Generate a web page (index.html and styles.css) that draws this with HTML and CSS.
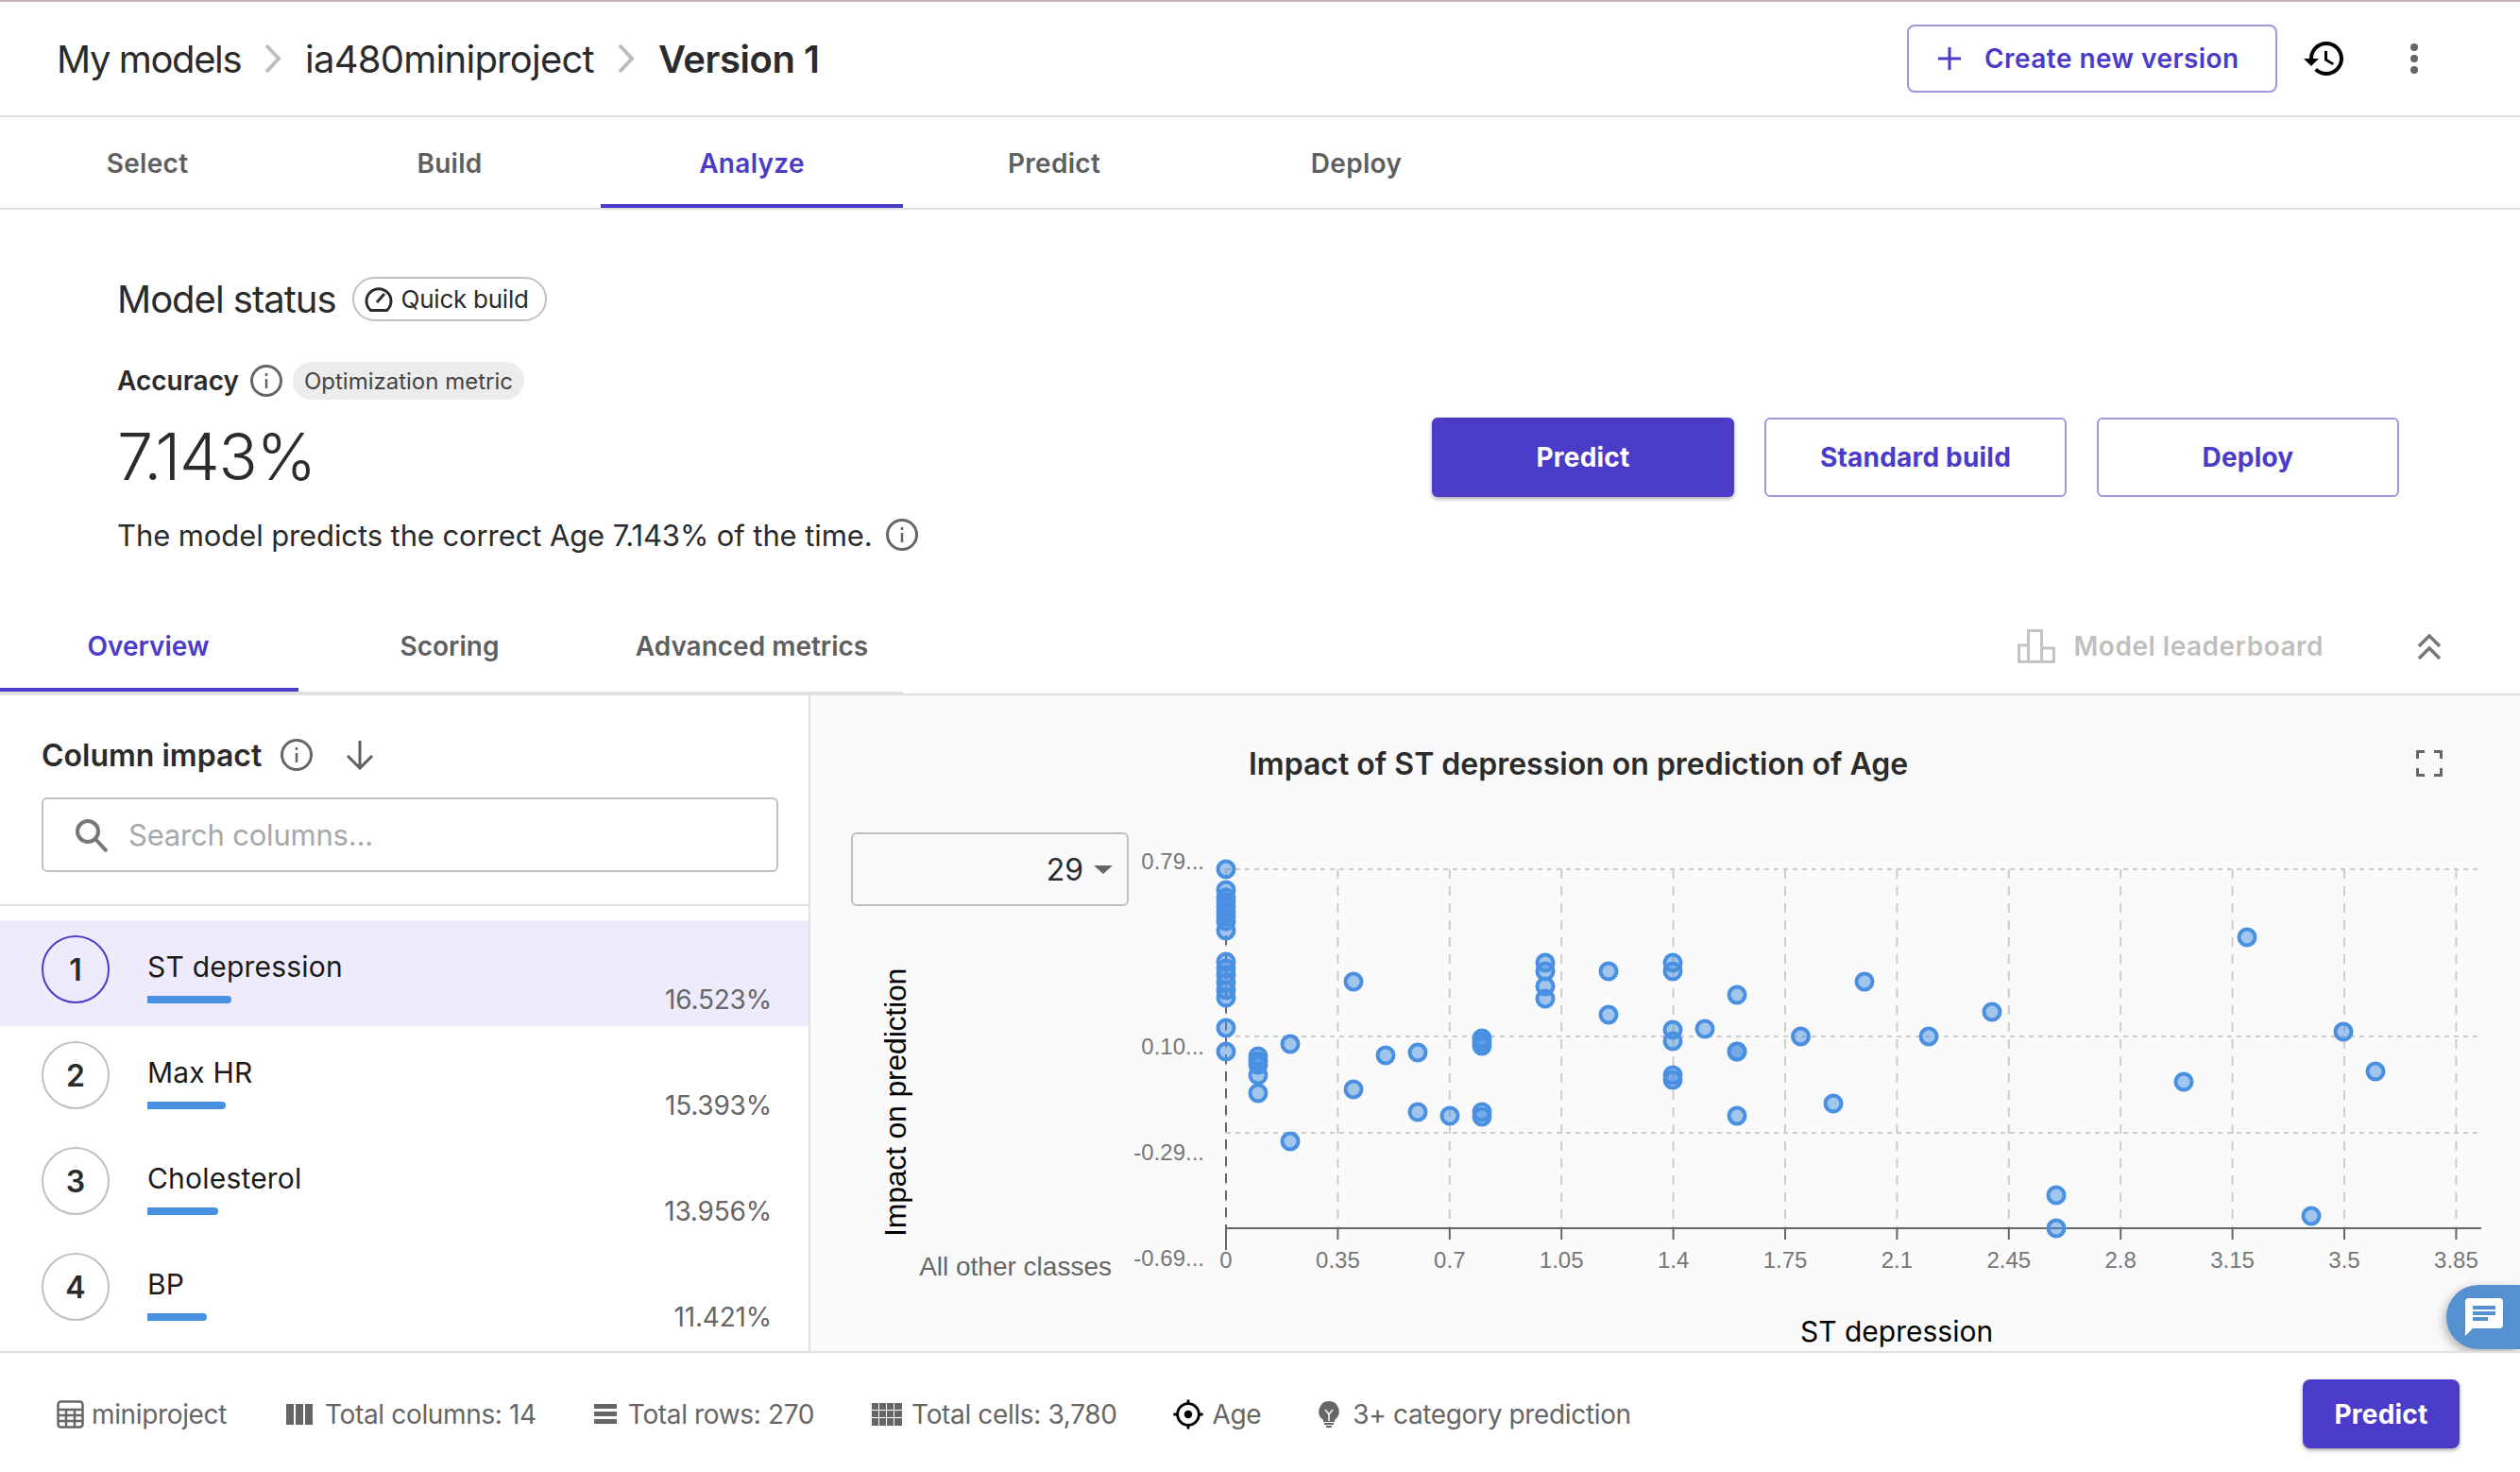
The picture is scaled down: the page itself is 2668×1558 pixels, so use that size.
FILE: index.html
```html
<!DOCTYPE html>
<html lang="en">
<head>
  <meta charset="UTF-8">
  <title>Analyze - Version 1</title>
  <link rel="stylesheet" href="styles.css">
</head>
<body>
  <!-- Header -->
  <header class="topbar">
    <nav class="crumbs">
      <span>My models</span>
      <svg class="crumb-sep" width="18" height="32" viewBox="0 0 18 32"><path d="M2 2l13 14L2 30" /></svg>
      <span>ia480miniproject</span>
      <svg class="crumb-sep" width="18" height="32" viewBox="0 0 18 32"><path d="M2 2l13 14L2 30" /></svg>
      <strong>Version 1</strong>
    </nav>
    <button class="btn-new">
      <svg width="24" height="24" viewBox="0 0 24 24"><path d="M12 0v24M0 12h24" /></svg>
      Create new version
    </button>
    <svg class="icon-history" width="48" height="48" viewBox="0 0 24 24"><path d="M13 3c-4.97 0-9 4.03-9 9H1l3.89 3.89.07.14L9 12H6c0-3.87 3.13-7 7-7s7 3.13 7 7-3.13 7-7 7c-1.93 0-3.68-.79-4.94-2.06l-1.42 1.42C8.27 19.99 10.51 21 13 21c4.97 0 9-4.03 9-9s-4.03-9-9-9zm-1 5v5l4.28 2.54.72-1.21-3.5-2.08V8H12z" /></svg>
    <div class="kebab"><i></i><i></i><i></i></div>
  </header>

  <!-- Steps -->
  <div class="steps">
    <div class="step first">Select</div>
    <div class="step">Build</div>
    <div class="step active">Analyze</div>
    <div class="step">Predict</div>
    <div class="step">Deploy</div>
  </div>

  <!-- Model status -->
  <section class="status">
    <div class="status-left">
      <div class="status-title">
        <h2>Model status</h2>
        <span class="pill">
          <svg width="30" height="26" viewBox="0 0 30 26"><path d="M6.500 24.500a13 13 0 1 1 17 0z" /><path d="M13 16l8-9" /></svg>
          Quick build
        </span>
      </div>
      <div class="metric-row">
        <strong>Accuracy</strong>
        <svg class="info" width="34" height="34" viewBox="0 0 34 34"><circle cx="17" cy="17" r="15.5" /><path d="M17 15v10M17 9v3" /></svg>
        <span class="tag">Optimization metric</span>
      </div>
      <div class="metric-value">7.143%</div>
      <div class="metric-desc">
        The model predicts the correct Age 7.143% of the time.
        <svg class="info" width="34" height="34" viewBox="0 0 34 34"><circle cx="17" cy="17" r="15.5" /><path d="M17 15v10M17 9v3" /></svg>
      </div>
    </div>
    <div class="status-actions">
      <button class="btn btn-primary">Predict</button>
      <button class="btn btn-outline">Standard build</button>
      <button class="btn btn-outline">Deploy</button>
    </div>
  </section>

  <!-- Sub tabs -->
  <div class="subbar">
    <div class="subtabs">
      <div class="subtab first active">Overview</div>
      <div class="subtab">Scoring</div>
      <div class="subtab">Advanced metrics</div>
    </div>
    <div class="leaderboard">
      <svg width="40" height="36" viewBox="0 0 40 36"><path d="M1.5 34.500V17h10v17.500zM11.500 34.500V1.500h14v33zM25.500 34.500V20h13v14.500z" /></svg>
      Model leaderboard
    </div>
    <svg class="collapse" width="24" height="28" viewBox="0 0 24 28"><path d="M1 13L12 2l11 11M1 26l11-11 11 11" /></svg>
  </div>

  <main class="main">
    <!-- Column impact -->
    <aside class="impact">
      <div class="impact-head">
        <h3>Column impact</h3>
        <svg class="info" width="34" height="34" viewBox="0 0 34 34"><circle cx="17" cy="17" r="15.5" /><path d="M17 15v10M17 9v3" /></svg>
        <svg class="sort" width="32" height="32" viewBox="0 0 32 32"><path d="M16 1v29M3 17l13 13 13-13" /></svg>
      </div>
      <div class="search">
        <svg width="36" height="36" viewBox="0 0 36 36"><circle cx="14" cy="14" r="11" /><path d="M22 22l12 13" /></svg>
        <span>Search columns...</span>
      </div>
      <div class="rows">
        <div class="row selected">
          <div class="rank">1</div>
          <div class="row-info"><div class="row-name">ST depression</div><div class="bar" style="width: 89px"></div></div>
          <div class="row-pct">16.523%</div>
        </div>
        <div class="row">
          <div class="rank">2</div>
          <div class="row-info"><div class="row-name">Max HR</div><div class="bar" style="width: 83px"></div></div>
          <div class="row-pct">15.393%</div>
        </div>
        <div class="row">
          <div class="rank">3</div>
          <div class="row-info"><div class="row-name">Cholesterol</div><div class="bar" style="width: 75px"></div></div>
          <div class="row-pct">13.956%</div>
        </div>
        <div class="row">
          <div class="rank">4</div>
          <div class="row-info"><div class="row-name">BP</div><div class="bar" style="width: 63px"></div></div>
          <div class="row-pct">11.421%</div>
        </div>
      </div>
    </aside>

    <!-- Chart -->
    <section class="chart">
      <div class="chart-head">
        <h3>Impact of ST depression on prediction of Age</h3>
        <svg width="28" height="28" viewBox="0 0 28 28"><path d="M1.500 9V1.500H9M19 1.500h7.500V9M26.500 19v7.500H19M9 26.500H1.500V19" /></svg>
      </div>
      <div class="chart-body">
        <div class="chart-side">
          <div class="class-select"><span>29</span><i class="caret"></i></div>
          <div class="y-title">Impact on prediction</div>
          <div class="other">All other classes</div>
        </div>
        <svg class="plot" width="1468" height="549" viewBox="1200 881 1468 549">
          <g class="grid-h">
            <line x1="1298" y1="920" x2="2627" y2="920" />
            <line x1="1298" y1="1097" x2="2627" y2="1097" />
            <line x1="1298" y1="1199" x2="2627" y2="1199" />
          </g>
          <g class="grid-v">
            <line x1="1298" y1="920" x2="1298" y2="1300" />
            <line x1="1416.400" y1="920" x2="1416.400" y2="1300" />
            <line x1="1534.800" y1="920" x2="1534.800" y2="1300" />
            <line x1="1653.200" y1="920" x2="1653.200" y2="1300" />
            <line x1="1771.600" y1="920" x2="1771.600" y2="1300" />
            <line x1="1890" y1="920" x2="1890" y2="1300" />
            <line x1="2008.400" y1="920" x2="2008.400" y2="1300" />
            <line x1="2126.800" y1="920" x2="2126.800" y2="1300" />
            <line x1="2245.200" y1="920" x2="2245.200" y2="1300" />
            <line x1="2363.600" y1="920" x2="2363.600" y2="1300" />
            <line x1="2482" y1="920" x2="2482" y2="1300" />
            <line x1="2600.400" y1="920" x2="2600.400" y2="1300" />
          </g>
          <line class="y-axis" x1="1298" y1="990" x2="1298" y2="1300" />
          <g class="axis">
            <line x1="1298" y1="1300" x2="2627" y2="1300" />
            <line x1="1298" y1="1300" x2="1298" y2="1323" />
            <line x1="1416.400" y1="1300" x2="1416.400" y2="1312" />
            <line x1="1534.800" y1="1300" x2="1534.800" y2="1312" />
            <line x1="1653.200" y1="1300" x2="1653.200" y2="1312" />
            <line x1="1771.600" y1="1300" x2="1771.600" y2="1312" />
            <line x1="1890" y1="1300" x2="1890" y2="1312" />
            <line x1="2008.400" y1="1300" x2="2008.400" y2="1312" />
            <line x1="2126.800" y1="1300" x2="2126.800" y2="1312" />
            <line x1="2245.200" y1="1300" x2="2245.200" y2="1312" />
            <line x1="2363.600" y1="1300" x2="2363.600" y2="1312" />
            <line x1="2482" y1="1300" x2="2482" y2="1312" />
            <line x1="2600.400" y1="1300" x2="2600.400" y2="1312" />
          </g>
          <g class="ticks-y">
            <text x="1275" y="920">0.79...</text>
            <text x="1275" y="1116">0.10...</text>
            <text x="1275" y="1228">-0.29...</text>
            <text x="1275" y="1340">-0.69...</text>
          </g>
          <g class="ticks-x">
            <text x="1298" y="1342">0</text>
            <text x="1416.400" y="1342">0.35</text>
            <text x="1534.800" y="1342">0.7</text>
            <text x="1653.200" y="1342">1.05</text>
            <text x="1771.600" y="1342">1.4</text>
            <text x="1890" y="1342">1.75</text>
            <text x="2008.400" y="1342">2.1</text>
            <text x="2126.800" y="1342">2.45</text>
            <text x="2245.200" y="1342">2.8</text>
            <text x="2363.600" y="1342">3.15</text>
            <text x="2482" y="1342">3.5</text>
            <text x="2600.400" y="1342">3.85</text>
          </g>
          <text class="x-title" x="2008" y="1420">ST depression</text>
          <g class="points">
            <circle cx="1298" cy="920" r="8.500" /><circle cx="1298" cy="942" r="8.500" /><circle cx="1298" cy="950" r="8.500" /><circle cx="1298" cy="955" r="8.500" /><circle cx="1298" cy="960" r="8.500" /><circle cx="1298" cy="965" r="8.500" /><circle cx="1298" cy="970" r="8.500" /><circle cx="1298" cy="975" r="8.500" /><circle cx="1298" cy="985" r="8.500" />
            <circle cx="1298" cy="1018" r="8.500" /><circle cx="1298" cy="1025" r="8.500" /><circle cx="1298" cy="1032" r="8.500" /><circle cx="1298" cy="1040" r="8.500" /><circle cx="1298" cy="1048" r="8.500" /><circle cx="1298" cy="1056" r="8.500" /><circle cx="1298" cy="1088" r="8.500" /><circle cx="1298" cy="1113" r="8.500" />
            <circle cx="1332" cy="1118" r="8.500" /><circle cx="1332" cy="1123" r="8.500" /><circle cx="1332" cy="1127" r="8.500" /><circle cx="1332" cy="1138" r="8.500" /><circle cx="1332" cy="1157" r="8.500" />
            <circle cx="1366" cy="1105" r="8.500" /><circle cx="1366" cy="1208" r="8.500" />
            <circle cx="1433" cy="1039" r="8.500" /><circle cx="1433" cy="1153" r="8.500" />
            <circle cx="1467" cy="1117" r="8.500" />
            <circle cx="1501" cy="1114" r="8.500" /><circle cx="1501" cy="1177" r="8.500" />
            <circle cx="1535" cy="1181" r="8.500" />
            <circle cx="1569" cy="1099" r="8.500" /><circle cx="1569" cy="1103" r="8.500" /><circle cx="1569" cy="1107" r="8.500" /><circle cx="1569" cy="1177" r="8.500" /><circle cx="1569" cy="1182" r="8.500" />
            <circle cx="1636" cy="1019" r="8.500" /><circle cx="1636" cy="1028" r="8.500" /><circle cx="1636" cy="1044" r="8.500" /><circle cx="1636" cy="1057" r="8.500" />
            <circle cx="1703" cy="1028" r="8.500" /><circle cx="1703" cy="1074" r="8.500" />
            <circle cx="1771" cy="1019" r="8.500" /><circle cx="1771" cy="1028" r="8.500" /><circle cx="1771" cy="1090" r="8.500" /><circle cx="1771" cy="1102" r="8.500" /><circle cx="1771" cy="1138" r="8.500" /><circle cx="1771" cy="1143" r="8.500" />
            <circle cx="1805" cy="1089" r="8.500" />
            <circle cx="1839" cy="1053" r="8.500" /><circle cx="1839" cy="1113" r="8.500" /><circle cx="1839" cy="1113" r="8.500" /><circle cx="1839" cy="1181" r="8.500" />
            <circle cx="1906.500" cy="1097" r="8.500" />
            <circle cx="1941" cy="1168" r="8.500" />
            <circle cx="1974" cy="1039" r="8.500" />
            <circle cx="2042" cy="1097" r="8.500" />
            <circle cx="2109" cy="1071" r="8.500" />
            <circle cx="2177" cy="1265" r="8.500" /><circle cx="2177" cy="1300" r="8.500" />
            <circle cx="2312" cy="1145" r="8.500" />
            <circle cx="2379" cy="992" r="8.500" />
            <circle cx="2447" cy="1287" r="8.500" />
            <circle cx="2481" cy="1092" r="8.500" />
            <circle cx="2515" cy="1134" r="8.500" />
          </g>
        </svg>
      </div>
      <div class="chat-bubble">
        <svg width="40" height="40" viewBox="0 0 40 40"><path d="M4 0h32a4 4 0 0 1 4 4v24a4 4 0 0 1-4 4H8l-8 8V4a4 4 0 0 1 4-4z" /><path class="lines" d="M8 8h24v4H8zM8 14h24v4H8zM8 20h16v4H8z" /></svg>
      </div>
    </section>
  </main>

  <!-- Footer -->
  <footer class="footer">
    <div class="fact fact-file">
      <svg width="30" height="30" viewBox="0 0 30 30"><rect x="1.500" y="1.500" width="26" height="27" rx="3" /><path d="M2 10h25M2 16h25M2 22h25M10 10v18M19 10v18" /></svg>
      miniproject
    </div>
    <div class="fact fact-cols">
      <svg class="solid" width="28" height="24" viewBox="0 0 28 24"><path d="M0 1h8v22H0zM10 1h8v22h-8zM20 1h8v22h-8z" /></svg>
      Total columns: 14
    </div>
    <div class="fact fact-rows">
      <svg class="solid" width="24" height="24" viewBox="0 0 24 24"><path d="M0 1h24v5H0zM0 9h24v5H0zM0 17h24v5H0z" /></svg>
      Total rows: 270
    </div>
    <div class="fact fact-cells">
      <svg class="solid" width="32" height="24" viewBox="0 0 32 24"><path d="M0 0h7v7H0zM8 0h7v7H8zM16 0h7v7h-7zM24 0h8v7h-8zM0 8h7v7H0zM8 8h7v7H8zM16 8h7v7h-7zM24 8h8v7h-8zM0 16h7v8H0zM8 16h7v8H8zM16 16h7v8h-7zM24 16h8v8h-8z" /></svg>
      Total cells: 3,780
    </div>
    <div class="fact fact-target">
      <svg class="target" width="34" height="34" viewBox="0 0 24 24"><path d="M12 9c-1.660 0-3 1.340-3 3s1.340 3 3 3 3-1.340 3-3-1.340-3-3-3zm8.940 2c-.46-4.170-3.770-7.480-7.940-7.940V1h-2v2.060C6.830 3.520 3.520 6.830 3.060 11H1v2h2.060c.46 4.170 3.770 7.480 7.940 7.940V23h2v-2.060c4.170-.46 7.480-3.770 7.940-7.940H23v-2h-2.060zM12 19c-3.870 0-7-3.130-7-7s3.130-7 7-7 7 3.130 7 7-3.130 7-7 7z" /></svg>
      Age
    </div>
    <div class="fact fact-type">
      <svg class="solid" width="22" height="28" viewBox="0 0 22 28"><path d="M11 0a11 11 0 0 1 6 20v2H5v-2A11 11 0 0 1 11 0zM6 23h10v2H6zM8 26h6v2H8z" /><path class="cut" d="M7 9l4 5 4-5M11 14v7" /></svg>
      3+ category prediction
    </div>
    <button class="btn-footer">Predict</button>
  </footer>
</body>
</html>
```

FILE: styles.css
```css
* {
  box-sizing: border-box;
}
html, body {
  height: 100%;
}
body {
  margin: 0;
  height: 1558px;
  overflow: hidden;
  display: flex;
  flex-direction: column;
  font-family: Inter, "Noto Sans", sans-serif;
  color: #2b2b2b;
  background: #fff;
  border-top: 2px solid #c9b4bc;
}
h2, h3 {
  margin: 0;
  font-weight: 400;
}
button {
  font-family: inherit;
  cursor: pointer;
}

/* header */
.topbar {
  height: 122px;
  flex: none;
  display: flex;
  align-items: center;
  padding: 0 0 0 60px;
  border-bottom: 2px solid #e0e0e0;
}
.crumbs {
  display: flex;
  align-items: center;
  gap: 25px;
  font-size: 40px;
  letter-spacing: -0.75px;
  margin-right: auto;
}
.crumbs span:first-child {
  letter-spacing: -1.4px;
}
.crumbs strong {
  font-weight: 600;
  letter-spacing: -0.45px;
}
.crumb-sep path {
  fill: none;
  stroke: #bdbdbd;
  stroke-width: 4;
}
.btn-new {
  width: 392px;
  height: 72px;
  display: flex;
  align-items: center;
  gap: 25px;
  padding: 0 0 0 31px;
  background: #fff;
  border: 2px solid #9c97e0;
  border-radius: 8px;
  color: #4a3bc9;
  font-size: 28px;
  font-weight: 600;
  letter-spacing: 0.45px;
}
.btn-new svg path {
  fill: none;
  stroke: #4a3bc9;
  stroke-width: 3;
}
.icon-history {
  margin-left: 26px;
}
.kebab {
  display: flex;
  flex-direction: column;
  gap: 4px;
  margin: 0 108px 0 67px;
}
.kebab i {
  width: 8px;
  height: 8px;
  border-radius: 50%;
  background: #666;
}

/* steps */
.steps {
  height: 98px;
  flex: none;
  display: flex;
  border-bottom: 2px solid #e0e0e0;
}
.step {
  width: 320px;
  height: 96px;
  display: flex;
  align-items: center;
  justify-content: center;
  padding-top: 2px;
  font-size: 28px;
  font-weight: 600;
  letter-spacing: 0.3px;
  color: #5f5f5f;
}
.step.first {
  width: 316px;
  padding-right: 4px;
}
.step.active {
  color: #4a3bc9;
  box-shadow: inset 0 -4px 0 #4a3bc9;
}

/* model status */
.status {
  height: 414px;
  flex: none;
  display: flex;
  justify-content: space-between;
  padding: 70px 128px 0 124px;
}
.status-title {
  display: flex;
  align-items: center;
  gap: 17px;
}
.status-title h2 {
  font-size: 40px;
  letter-spacing: -1px;
}
.pill {
  height: 47px;
  display: flex;
  align-items: center;
  gap: 9px;
  padding: 0 17px 0 11px;
  border: 2px solid #c0c0c0;
  border-radius: 24px;
  font-size: 26px;
  letter-spacing: -0.25px;
}
.pill svg path {
  fill: none;
  stroke: #2b2b2b;
  stroke-width: 3;
}
.info circle {
  fill: none;
  stroke: #666;
  stroke-width: 3;
}
.info path {
  fill: none;
  stroke: #666;
  stroke-width: 2.500;
}
.metric-row {
  height: 40px;
  margin-top: 42px;
  display: flex;
  align-items: center;
  gap: 12px;
}
.metric-row strong {
  font-size: 28px;
  font-weight: 600;
}
.tag {
  height: 40px;
  margin-left: -1px;
  display: flex;
  align-items: center;
  padding: 0 12px;
  border-radius: 20px;
  background: #ececec;
  font-size: 24px;
  color: #444;
}
.metric-value {
  height: 80px;
  margin-top: 20px;
  line-height: 80px;
  font-size: 68px;
  font-weight: 300;
  letter-spacing: -1.2px;
}
.metric-desc {
  margin-top: 23px;
  height: 40px;
  display: flex;
  align-items: center;
  gap: 14px;
  font-size: 31px;
  letter-spacing: -0.1px;
}
.status-actions {
  display: flex;
  gap: 32px;
  margin-top: 150px;
}
.btn {
  width: 320px;
  height: 84px;
  border-radius: 6px;
  font-size: 28px;
  font-weight: 700;
  letter-spacing: 0.2px;
}
.btn-primary {
  background: #4a3bc9;
  border: none;
  color: #fff;
  box-shadow: 0 2px 4px rgba(0, 0, 0, 0.35);
}
.btn-outline {
  background: #fff;
  border: 2px solid #9c97e0;
  color: #4a3bc9;
}

/* sub tabs */
.subbar {
  height: 100px;
  flex: none;
  display: flex;
  align-items: flex-start;
  border-bottom: 2px solid #e0e0e0;
}
.subtabs {
  display: flex;
  height: 98px;
  border-bottom: 2px solid #e0e0e0;
}
.subtab {
  width: 320px;
  height: 96px;
  display: flex;
  align-items: center;
  justify-content: center;
  font-size: 28px;
  font-weight: 600;
  color: #5f5f5f;
}
.subtab.first {
  width: 316px;
  padding-right: 2px;
}
.subtab.active {
  color: #4a3bc9;
  box-shadow: inset 0 -4px 0 #4a3bc9;
}
.leaderboard {
  height: 96px;
  margin-left: auto;
  display: flex;
  align-items: center;
  gap: 20px;
  font-size: 28px;
  font-weight: 600;
  letter-spacing: 0.5px;
  color: #bfbfbf;
}
.leaderboard svg path {
  fill: none;
  stroke: #c4c4c4;
  stroke-width: 3;
}
.collapse {
  margin: 35px 84px 0 100px;
}
.collapse path {
  fill: none;
  stroke: #777;
  stroke-width: 3.500;
}

/* main */
.main {
  height: 694px;
  flex: none;
  display: flex;
  overflow: hidden;
}
.impact {
  width: 858px;
  flex: none;
  border-right: 2px solid #e0e0e0;
}
.impact-head {
  display: flex;
  align-items: center;
  height: 36px;
  margin: 45px 0 0 44px;
}
.impact-head h3 {
  font-size: 32px;
  font-weight: 600;
}
.impact-head .info {
  margin-left: 20px;
}
.sort {
  margin-left: 34px;
}
.sort path {
  fill: none;
  stroke: #5f5f5f;
  stroke-width: 3;
}
.search {
  width: 780px;
  height: 79px;
  margin: 27px 0 0 44px;
  display: flex;
  align-items: center;
  gap: 21px;
  padding-left: 33px;
  border: 2px solid #c0c0c0;
  border-radius: 6px;
  font-size: 31px;
  letter-spacing: -0.2px;
  color: #a8a8a8;
}
.search svg * {
  fill: none;
  stroke: #777;
  stroke-width: 4;
}
.rows {
  margin-top: 34px;
  border-top: 2px solid #e0e0e0;
  padding-top: 15px;
}
.row {
  height: 112px;
  display: flex;
  padding: 0 39px 0 44px;
}
.row.selected {
  background: #eeebfc;
}
.rank {
  width: 72px;
  height: 72px;
  margin-top: 16px;
  display: flex;
  align-items: center;
  justify-content: center;
  border: 2px solid #c0c0c0;
  border-radius: 50%;
  background: #fff;
  font-size: 32px;
  font-weight: 600;
}
.row.selected .rank {
  border-color: #4a3bc9;
  background: transparent;
}
.row-info {
  margin: 29px 0 0 40px;
}
.row-name {
  height: 40px;
  line-height: 40px;
  font-size: 30px;
  letter-spacing: 0.2px;
  color: #1a1a1a;
}
.bar {
  height: 8px;
  margin-top: 11px;
  background: #4a90e2;
  border-radius: 0 4px 4px 0;
}
.row-pct {
  margin: 66px 0 0 auto;
  line-height: 36px;
  font-size: 28px;
  letter-spacing: -0.2px;
  color: #666;
}

/* chart */
.chart {
  position: relative;
  flex: 1;
  background: #fafafa;
}
.chart-head {
  height: 145px;
  display: flex;
  align-items: flex-start;
  justify-content: space-between;
  padding: 53px 82px 0 464px;
}
.chart-head h3 {
  line-height: 40px;
  font-size: 32px;
  font-weight: 600;
}
.chart-head svg {
  margin-top: 5px;
}
.chart-head svg path {
  fill: none;
  stroke: #666;
  stroke-width: 3;
}
.chart-body {
  display: flex;
}
.chart-side {
  width: 342px;
  flex: none;
}
.class-select {
  width: 294px;
  height: 78px;
  margin-left: 43px;
  display: flex;
  align-items: center;
  justify-content: flex-end;
  gap: 11px;
  padding-right: 15px;
  border: 2px solid #c0c0c0;
  border-radius: 6px;
  font-size: 32px;
}
.caret {
  width: 0;
  height: 0;
  border-left: 10px solid transparent;
  border-right: 10px solid transparent;
  border-top: 9px solid #666;
}
.y-title {
  width: 34px;
  height: 284px;
  margin: 66px 0 0 73px;
  writing-mode: vertical-rl;
  transform: rotate(180deg);
  line-height: 34px;
  font-family: "Liberation Sans", Arial, sans-serif;
  font-size: 32px;
  letter-spacing: -0.2px;
  color: #000;
  white-space: nowrap;
}
.other {
  margin-top: 14px;
  padding-right: 23px;
  text-align: right;
  line-height: 36px;
  font-family: "Liberation Sans", Arial, sans-serif;
  font-size: 28px;
  color: #666;
}
.plot {
  display: block;
  flex: none;
  overflow: visible;
}
.grid-h line {
  stroke: #ccc;
  stroke-width: 2;
  stroke-dasharray: 5 5;
}
.grid-v line {
  stroke: #ccc;
  stroke-width: 2;
  stroke-dasharray: 10 8;
}
.y-axis {
  stroke: #666;
  stroke-width: 2;
  stroke-dasharray: 10 8;
}
.axis line {
  stroke: #666;
  stroke-width: 2;
}
.ticks-y text, .ticks-x text {
  font-family: "Liberation Sans", Arial, sans-serif;
  font-size: 24px;
  fill: #777;
}
.ticks-y text {
  text-anchor: end;
}
.ticks-x text {
  text-anchor: middle;
}
.x-title {
  font-family: Inter, sans-serif;
  font-size: 30px;
  fill: #000;
  text-anchor: middle;
}
.points circle {
  fill: rgba(74, 144, 226, 0.5);
  stroke: #4a90e2;
  stroke-width: 4;
}
.chat-bubble {
  position: absolute;
  right: 0;
  top: 624px;
  width: 78px;
  height: 68px;
  padding: 14px 0 0 20px;
  background: #5590d0;
  border-radius: 34px 0 0 34px;
  box-shadow: -2px 4px 12px rgba(0, 0, 0, 0.3);
}
.chat-bubble svg path {
  fill: #fff;
}
.chat-bubble svg .lines {
  fill: #5590d0;
}

/* footer */
.footer {
  height: 126px;
  flex: 1;
  display: flex;
  align-items: center;
  gap: 61px;
  padding: 3px 64px 0 60px;
  border-top: 2px solid #e0e0e0;
}
.fact {
  display: flex;
  align-items: center;
  gap: 12px;
  font-size: 28px;
  letter-spacing: -0.35px;
  color: #666;
}
.fact-file {
  gap: 7px;
}
.fact-cols {
  gap: 13px;
  margin-left: 2px;
}
.fact-cells {
  gap: 10px;
}
.fact-target {
  gap: 9px;
  margin-left: -3px;
}
.fact-type {
  gap: 14px;
}
.fact svg * {
  fill: none;
  stroke: #666;
  stroke-width: 2.500;
}
.fact .solid * {
  fill: #666;
  stroke: none;
}
.fact .solid .cut {
  fill: none;
  stroke: #fff;
  stroke-width: 1.500;
}
.fact .target * {
  fill: #000;
  stroke: none;
}
.btn-footer {
  width: 166px;
  height: 73px;
  margin-left: auto;
  border: none;
  border-radius: 8px;
  background: #4a3bc9;
  color: #fff;
  font-size: 28px;
  font-weight: 700;
  letter-spacing: 0.2px;
  box-shadow: 0 2px 4px rgba(0, 0, 0, 0.35);
}
```
